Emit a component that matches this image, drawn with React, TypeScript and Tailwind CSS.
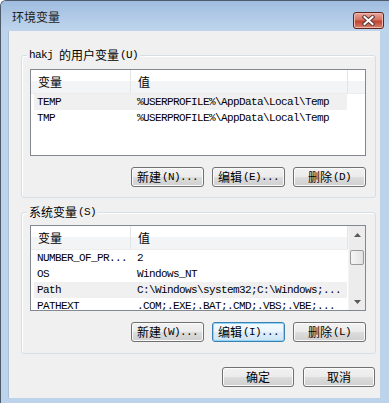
const cjk = "font-['Noto_Sans_CJK_SC',sans-serif]";
const mono = "font-['Liberation_Mono','Noto_Sans_CJK_SC',monospace] text-[11px] tracking-[-0.6px]";

type Row = { name: string; value: string; hi?: boolean };

const userVars: Row[] = [
  { name: "TEMP", value: "%USERPROFILE%\\AppData\\Local\\Temp", hi: true },
  { name: "TMP", value: "%USERPROFILE%\\AppData\\Local\\Temp" },
];

const sysVars: Row[] = [
  { name: "NUMBER_OF_PR...", value: "2" },
  { name: "OS", value: "Windows_NT" },
  { name: "Path", value: "C:\\Windows\\system32;C:\\Windows;...", hi: true },
  { name: "PATHEXT", value: ".COM;.EXE;.BAT;.CMD;.VBS;.VBE;..." },
];

function Btn({ zh, tail, focused, w = "w-[73px]" }: { zh: string; tail?: string; focused?: boolean; w?: string }) {
  return (
    <button
      className={
        "h-[20px] rounded-[3px] border flex items-center justify-center text-black " +
        w +
        (focused
          ? " border-[#3c7fb1] shadow-[inset_0_0_0_1px_#8fd3f7] bg-[linear-gradient(#f4fafd,#e9f5fc_50%,#dcedf8_50%,#cfe6f5)]"
          : " border-[#707070] shadow-[inset_0_0_0_1px_#fbfbfb] bg-[linear-gradient(#f2f2f2,#ebebeb_50%,#dddddd_50%,#cfcfcf)]")
      }
    >
      <span className={cjk + " text-[12px] leading-none"}>{zh}</span>
      {tail && <span className={mono + " leading-none ml-[1px]"}>{tail}</span>}
    </button>
  );
}

function Arrow({ up }: { up?: boolean }) {
  return (
    <svg width="7" height="4" viewBox="0 0 7 4">
      <path d={up ? "M0 4 L3.5 0 L7 4 Z" : "M0 0 L3.5 4 L7 0 Z"} fill="#5a5a5a" />
    </svg>
  );
}

function ListView({ rows, height, scroll }: { rows: Row[]; height: string; scroll?: boolean }) {
  return (
    <div className={"border border-[#828790] bg-white overflow-hidden flex " + height}>
      <div className="flex flex-col w-[317px] shrink-0">
        <div className="h-[24px] shrink-0 flex bg-[linear-gradient(#ffffff_50%,#f3f4f6_50%)] border-b border-[#ececec]">
          <div className={cjk + " w-[100px] border-r border-[#e3e4e6] pl-[7px] flex items-center text-[12px] text-black"}>变量</div>
          <div className={cjk + " w-[217px] border-r border-[#e3e4e6] pl-[7px] flex items-center text-[12px] text-black"}>值</div>
        </div>
        {rows.map((r) => (
          <div
            key={r.name}
            className={"ml-[3px] w-[313px] h-[16px] shrink-0 flex items-center text-black " + (r.hi ? "bg-[#f0f0f0]" : "")}
          >
            <span className={mono + " w-[100px] pl-[3px] whitespace-nowrap"}>{r.name}</span>
            <span className={mono + " pl-[3px] whitespace-nowrap"}>{r.value}</span>
          </div>
        ))}
      </div>
      {scroll ? (
        <div className="w-[17px] shrink-0 flex flex-col bg-[#ececec] border-l border-[#f4f4f4]">
          <div className="h-[17px] flex items-center justify-center">
            <Arrow up />
          </div>
          <div className="flex-1 px-[1px]">
            <div className="mt-[7px] h-[15px] rounded-[2px] border border-[#9a9a9a] bg-[linear-gradient(90deg,#f5f5f5,#e2e2e2)]" />
          </div>
          <div className="h-[17px] flex items-center justify-center">
            <Arrow />
          </div>
        </div>
      ) : (
        <div className="w-[17px] shrink-0 h-[24px] bg-[linear-gradient(#ffffff_50%,#f3f4f6_50%)] border-b border-[#ececec]" />
      )}
    </div>
  );
}

function Group({ label, children, className }: { label: React.ReactNode; children: React.ReactNode; className: string }) {
  return (
    <div className={"relative ml-[12px] w-[355px] border border-[#d5dfe5] rounded-[3px] shadow-[inset_1px_1px_0_#ffffff] " + className}>
      <div className="absolute -top-[8px] left-[5px] px-[2px] bg-[#f0f0f0] h-[14px] flex items-center text-black">
        {label}
      </div>
      {children}
    </div>
  );
}

export default function App() {
  return (
    <div className="w-[389px] h-[403px] flex flex-col bg-[#bdd3ec] border-l border-t border-[#4d5b6b] rounded-tl-[6px] overflow-hidden">
      <div className="h-[30px] shrink-0 flex justify-between pl-[11px] pr-[5px] bg-[linear-gradient(#9fbcdf,#b4cce8_60%,#bfd5ed)]">
        <span className={cjk + " mt-[9px] text-[12px] leading-[14px] text-[#1b1b1b]"}>环境变量</span>
        <div className="mt-[11px] w-[31px] h-[17px] rounded-[3px] border border-[#5b2620] bg-[linear-gradient(#e8a89c,#d47263_45%,#c2432f_55%,#d5826f)] shadow-[inset_0_0_0_1px_#f0b7ac] flex items-center justify-center">
          <svg width="13" height="11" viewBox="0 0 13 11">
            <path d="M2.5 2 L10.5 9 M10.5 2 L2.5 9" stroke="#5a3a36" strokeWidth="4" strokeLinecap="square" />
            <path d="M2.5 2 L10.5 9 M10.5 2 L2.5 9" stroke="#ffffff" strokeWidth="2" strokeLinecap="square" />
          </svg>
        </div>
      </div>

      <div className="ml-[7px] w-[372px] h-[367px] shrink-0 flex flex-col bg-[#f0f0f0] border-l border-[#a9bfd7]">
        <Group
          className="mt-[24px] h-[143px] pl-[8px] pt-[13px]"
          label={
            <>
              <span className={mono + " leading-none mr-[6px]"}>hakj</span>
              <span className={cjk + " text-[12px] leading-none"}>的用户变量</span>
              <span className={mono + " leading-none ml-[1px]"}>(U)</span>
            </>
          }
        >
          <div className="w-[336px]">
            <ListView rows={userVars} height="h-[87px]" />
          </div>
          <div className="mt-[11px] flex justify-end gap-[8px] pr-[9px]">
            <Btn zh="新建" tail="(N)..." />
            <Btn zh="编辑" tail="(E)..." />
            <Btn zh="删除" tail="(D)" />
          </div>
        </Group>

        <Group
          className="mt-[14px] h-[142px] pl-[8px] pt-[12px]"
          label={
            <>
              <span className={cjk + " text-[12px] leading-none"}>系统变量</span>
              <span className={mono + " leading-none ml-[1px]"}>(S)</span>
            </>
          }
        >
          <div className="w-[336px]">
            <ListView rows={sysVars} height="h-[86px]" scroll />
          </div>
          <div className="mt-[11px] flex justify-end gap-[8px] pr-[9px]">
            <Btn zh="新建" tail="(W)..." />
            <Btn zh="编辑" tail="(I)..." focused />
            <Btn zh="删除" tail="(L)" />
          </div>
        </Group>

        <div className="mt-[13px] flex justify-end gap-[9px] pr-[5px]">
          <Btn zh="确定" w="w-[72px]" />
          <Btn zh="取消" w="w-[72px]" />
        </div>
      </div>
    </div>
  );
}
